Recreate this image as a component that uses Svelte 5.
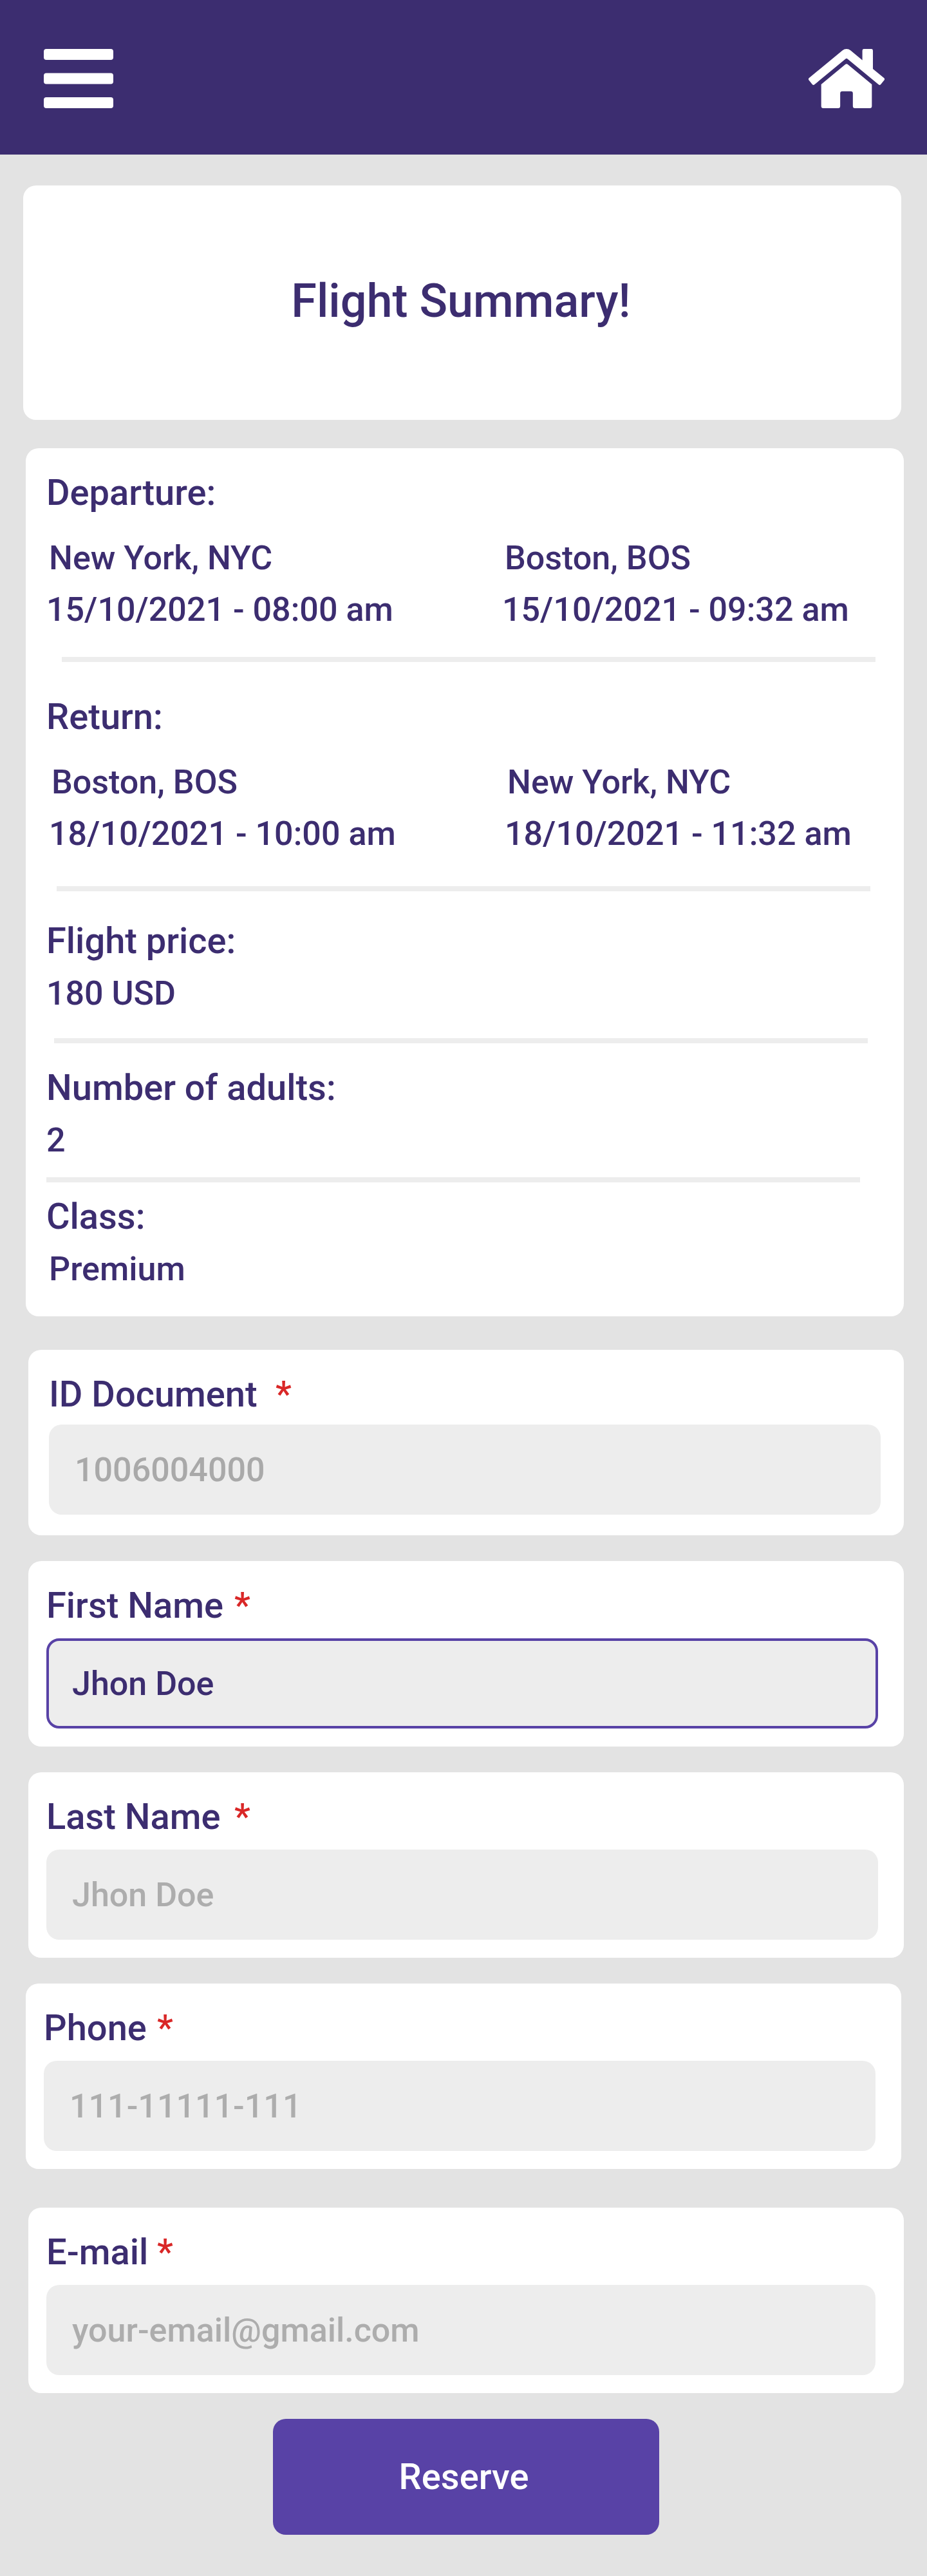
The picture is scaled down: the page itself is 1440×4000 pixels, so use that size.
<script>
  const legs = [
    {
      id: 'departure',
      title: 'Departure:',
      stops: [
        { city: 'New York, NYC', time: '15/10/2021 - 08:00 am' },
        { city: 'Boston, BOS', time: '15/10/2021 - 09:32 am' }
      ]
    },
    {
      id: 'return',
      title: 'Return:',
      stops: [
        { city: 'Boston, BOS', time: '18/10/2021 - 10:00 am' },
        { city: 'New York, NYC', time: '18/10/2021 - 11:32 am' }
      ]
    }
  ];

  const details = [
    { id: 'price', title: 'Flight price:', value: '180 USD' },
    { id: 'adults', title: 'Number of adults:', value: '2' },
    { id: 'class', title: 'Class:', value: 'Premium' }
  ];

  const fields = [
    { id: 'document', label: 'ID Document', placeholder: '1006004000', value: '' },
    { id: 'first-name', label: 'First Name', placeholder: 'Jhon Doe', value: 'Jhon Doe' },
    { id: 'last-name', label: 'Last Name', placeholder: 'Jhon Doe', value: '' },
    { id: 'phone', label: 'Phone', placeholder: '111-11111-111', value: '' },
    { id: 'email', label: 'E-mail', placeholder: 'your-email@gmail.com', value: '' }
  ];
</script>

<div class="page">
  <header class="topbar">
    <button class="icon-button" aria-label="Menu">
      <svg class="menu-icon" viewBox="0 0 108 92" fill="currentColor">
        <rect width="108" height="17" rx="4" />
        <rect y="37.5" width="108" height="17" rx="4" />
        <rect y="75" width="108" height="17" rx="4" />
      </svg>
    </button>
    <button class="icon-button" aria-label="Home">
      <svg class="home-icon" viewBox="0 32 576 448" preserveAspectRatio="none" fill="currentColor">
        <path d="M280.37 148.26L96 300.11V464a16 16 0 0 0 16 16l112.06-.29a16 16 0 0 0 15.92-16V368a16 16 0 0 1 16-16h64a16 16 0 0 1 16 16v95.64a16 16 0 0 0 16 16.05L464 480a16 16 0 0 0 16-16V300L295.67 148.26a12.19 12.19 0 0 0-15.3 0zM571.6 251.47L488 182.56V44.05a12 12 0 0 0-12-12h-56a12 12 0 0 0-12 12v72.61L318.47 43a48 48 0 0 0-61 0L4.34 251.47a12 12 0 0 0-1.6 16.9l25.5 31A12 12 0 0 0 45.15 301l235.22-193.74a12.19 12.19 0 0 1 15.3 0L530.9 301a12 12 0 0 0 16.9-1.6l25.5-31a12 12 0 0 0-1.7-16.93z" />
      </svg>
    </button>
  </header>

  <main>
    <section class="card title-card">
      <h1>Flight Summary!</h1>
    </section>

    <section class="card summary">
      {#each legs as leg}
        <div class="leg {leg.id}">
          <h2>{leg.title}</h2>
          <div class="stops">
            {#each leg.stops as stop}
              <div class="stop">
                <p class="city">{stop.city}</p>
                <p>{stop.time}</p>
              </div>
            {/each}
          </div>
        </div>
        <hr class="after-{leg.id}" />
      {/each}
      {#each details as detail, i}
        <div class="detail {detail.id}">
          <h2>{detail.title}</h2>
          <p>{detail.value}</p>
        </div>
        {#if i < details.length - 1}
          <hr class="after-{detail.id}" />
        {/if}
      {/each}
    </section>

    <form>
      {#each fields as field}
        <div class="card field {field.id}">
          <label for={field.id}>
            <span class="name">{field.label}</span>
            <span class="required">*</span>
          </label>
          <input id={field.id} class:active={field.value} placeholder={field.placeholder} value={field.value} />
        </div>
      {/each}
      <button class="reserve" type="button">Reserve</button>
    </form>
  </main>
</div>

<style>
  :global(body) {
    margin: 0;
    background: #e3e3e3;
  }
  .page {
    width: 1440px;
    height: 4000px;
    overflow: hidden;
    background: #e3e3e3;
    color: #3c2d70;
    font-family: Roboto, 'Liberation Sans', sans-serif;
    font-weight: 500;
  }
  .page *,
  .page {
    box-sizing: border-box;
  }
  .topbar {
    display: flex;
    align-items: flex-start;
    justify-content: space-between;
    height: 240px;
    padding: 76px 66px 0 68px;
    background: #3c2d70;
  }
  .icon-button {
    display: block;
    padding: 0;
    border: 0;
    background: none;
    color: #fff;
  }
  .icon-button svg {
    display: block;
    height: 92px;
  }
  .menu-icon {
    width: 108px;
  }
  .home-icon {
    width: 118px;
  }
  main {
    display: flex;
    flex-direction: column;
    padding-top: 48px;
  }
  .card {
    border-radius: 20px;
    background: #fff;
  }
  h1,
  h2,
  p {
    margin: 0;
    font-weight: 500;
  }
  h1 {
    font-size: 72px;
    line-height: 85px;
  }
  h2 {
    font-size: 56px;
    line-height: 66px;
  }
  p {
    font-size: 52px;
    line-height: 61px;
  }
  .title-card {
    display: flex;
    justify-content: center;
    height: 364px;
    margin: 0 40px 0 36px;
    padding: 137px 4px 0 0;
  }
  .summary {
    height: 1348px;
    margin: 44px 36px 0 40px;
    padding: 36px 0 0 32px;
  }
  .stops {
    display: grid;
    grid-template-columns: 708px 1fr;
    margin-top: 38px;
  }
  .return .stops {
    padding-left: 4px;
  }
  .stop {
    display: grid;
    gap: 19px;
  }
  .city {
    padding-left: 4px;
  }
  .detail {
    display: grid;
    gap: 18px;
  }
  .class p {
    padding-left: 4px;
  }
  hr {
    width: 1264px;
    height: 8px;
    border: 0;
    background: #ededed;
  }
  .after-departure {
    margin: 43px 0 52px 24px;
  }
  .after-return {
    margin: 51px 0 44px 16px;
  }
  .after-price {
    margin: 39px 0 36px 12px;
  }
  .after-adults {
    margin: 27px 0 20px;
  }
  form {
    display: flex;
    flex-direction: column;
    gap: 40px;
    padding-top: 52px;
  }
  .field {
    height: 288px;
    margin: 0 36px 0 44px;
    padding: 36px 40px 0 28px;
  }
  .field.document {
    padding: 36px 36px 0 32px;
  }
  .field.phone {
    margin: 0 40px 20px 40px;
  }
  .field.email {
    padding-right: 44px;
  }
  label {
    display: flex;
    font-size: 56px;
    line-height: 66px;
    white-space: nowrap;
  }
  .name {
    width: 292px;
  }
  .document .name {
    width: 352px;
  }
  .phone .name {
    width: 176px;
  }
  .email .name {
    width: 172px;
  }
  .required {
    color: #d92727;
  }
  input {
    display: block;
    width: 100%;
    height: 140px;
    margin: 18px 0 0;
    padding: 40px 40px 39px;
    border: 0;
    border-radius: 20px;
    background: #ededed;
    color: #3c2d70;
    font: 500 52px/61px Roboto, 'Liberation Sans', sans-serif;
  }
  .document input {
    margin-top: 14px;
  }
  input.active {
    padding: 36px 36px 35px;
    border: 4px solid #5842a6;
  }
  input::placeholder {
    color: #adadad;
    opacity: 1;
  }
  .document input::placeholder {
    color: #a9a9a9;
  }
  .reserve {
    align-self: flex-start;
    width: 600px;
    height: 180px;
    margin-left: 424px;
    padding: 0 7px 0 0;
    border: 0;
    border-radius: 20px;
    background: #5842a6;
    color: #fff;
    font: 500 56px/66px Roboto, 'Liberation Sans', sans-serif;
  }
</style>
